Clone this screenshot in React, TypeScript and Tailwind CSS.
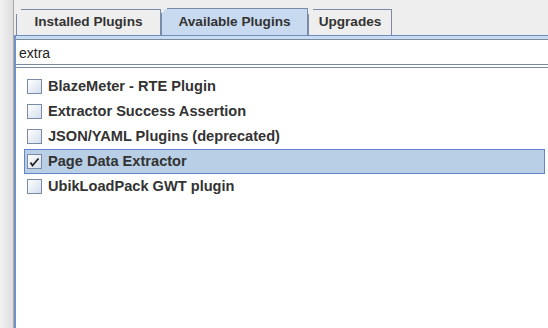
const rows = [
  { name: "BlazeMeter - RTE Plugin", checked: false },
  { name: "Extractor Success Assertion", checked: false },
  { name: "JSON/YAML Plugins (deprecated)", checked: false },
  { name: "Page Data Extractor", checked: true, selected: true },
  { name: "UbikLoadPack GWT plugin", checked: false },
];

const tabs = [
  { label: "Installed Plugins", w: "w-[145px]" },
  { label: "Available Plugins", w: "w-[147px]", active: true },
  { label: "Upgrades", w: "w-[84px]" },
];

const Checkbox = ({ checked }: { checked: boolean }) => (
  <div className="flex h-[15px] w-[15px] shrink-0 items-center justify-center border border-[#7a8aa8] bg-[linear-gradient(to_bottom_right,#ffffff,#d3deec)]">
    {checked && (
      <svg width="11" height="11" viewBox="0 0 11 11">
        <path d="M1.5 6.5 L3.5 9.5 L9.5 2.5" stroke="#222" strokeWidth="1.8" fill="none" />
      </svg>
    )}
  </div>
);

export default function App() {
  return (
    <div className="flex h-[328px] w-[548px] overflow-hidden bg-white font-['Liberation_Sans',sans-serif] text-[#333]">
      <div className="w-[14px] shrink-0 border-r border-[#a8a8a8] bg-[linear-gradient(to_right,#f2f2f2,#dedede)]" />
      <div className="flex min-w-0 flex-1 flex-col">
        <div className="flex h-[35px] shrink-0 items-end bg-[#eeeeee] pl-[2px]">
          {tabs.map((t) => (
            <div
              key={t.label}
              className={`relative flex ${t.w} items-center justify-center border border-b-0 border-[#7a8aa8] text-[13.6px] font-bold ${
                t.active ? "h-[27px] bg-[#c8daf0]" : "h-[26px] bg-[#eeeeee]"
              }`}
            >
              <span className="absolute -left-px -top-px h-[6px] w-[6px] bg-[linear-gradient(135deg,#eeeeee_50%,transparent_50%)]" />
              {t.label}
            </div>
          ))}
        </div>
        <div className="flex flex-1 flex-col border-l-2 border-[#7391c4]">
          <div className="h-px shrink-0 bg-[#6d8cc0]" />
          <div className="h-[3px] shrink-0 bg-[#c9dcf0]" />
          <div className="flex h-[26px] shrink-0 items-center border-t border-b border-[#7a8aa0] px-[3px] pt-[2px] text-[14px] font-normal text-[#222]">
            extra
          </div>
          <div className="h-[2px] shrink-0 bg-white" />
          <div className="flex flex-1 flex-col border-t border-[#7a8aa0] pt-[6px] pl-[8px] pr-[3px]">
            {rows.map((r) => (
              <div
                key={r.name}
                className={`flex h-[25px] items-center gap-[6px] border pl-[2px] text-[14.6px] font-bold ${
                  r.selected ? "border-[#6385c9] bg-[#b8cfe5]" : "border-transparent"
                }`}
              >
                <Checkbox checked={r.checked} />
                {r.name}
              </div>
            ))}
          </div>
        </div>
      </div>
    </div>
  );
}
